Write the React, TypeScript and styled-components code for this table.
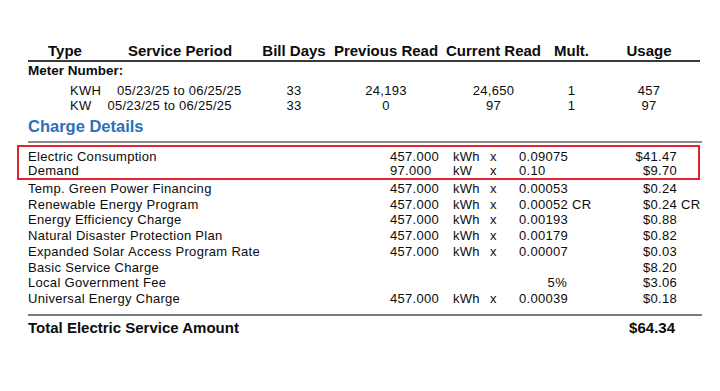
import styled, { createGlobalStyle } from "styled-components"

type Charge = {
  label: string
  qty?: string
  unit?: string
  rate?: string
  rateRight?: boolean
  amount: string
  suffix?: string
}

const highlighted: Charge[] = [
  { label: "Electric Consumption", qty: "457.000", unit: "kWh", rate: "0.09075", amount: "$41.47" },
  { label: "Demand", qty: "97.000", unit: "kW", rate: "0.10", amount: "$9.70" },
]

const charges: Charge[] = [
  { label: "Temp. Green Power Financing", qty: "457.000", unit: "kWh", rate: "0.00053", amount: "$0.24" },
  { label: "Renewable Energy Program", qty: "457.000", unit: "kWh", rate: "0.00052 CR", amount: "$0.24", suffix: "CR" },
  { label: "Energy Efficiency Charge", qty: "457.000", unit: "kWh", rate: "0.00193", amount: "$0.88" },
  { label: "Natural Disaster Protection Plan", qty: "457.000", unit: "kWh", rate: "0.00179", amount: "$0.82" },
  { label: "Expanded Solar Access Program Rate", qty: "457.000", unit: "kWh", rate: "0.00007", amount: "$0.03" },
  { label: "Basic Service Charge", amount: "$8.20" },
  { label: "Local Government Fee", rate: "5%", rateRight: true, amount: "$3.06" },
  { label: "Universal Energy Charge", qty: "457.000", unit: "kWh", rate: "0.00039", amount: "$0.18" },
]

const meters = [
  { type: "KWH", period: "05/23/25 to 06/25/25", days: "33", prev: "24,193", curr: "24,650", mult: "1", usage: "457" },
  { type: "KW", period: "05/23/25 to 06/25/25", days: "33", prev: "0", curr: "97", mult: "1", usage: "97" },
]

function ChargeLine({ c }: { c: Charge }) {
  return (
    <ChargeRow>
      <span>{c.label}</span>
      <span>{c.qty}</span>
      <span>{c.unit}</span>
      <span>{c.qty ? "x" : ""}</span>
      <Rate $right={c.rateRight}>{c.rate}</Rate>
      <Amount>{c.amount}</Amount>
      <Suffix>{c.suffix}</Suffix>
    </ChargeRow>
  )
}

export default function App() {
  return (
    <>
      <GlobalStyle />
      <Page>
        <HeaderRow>
          <span>Type</span>
          <span>Service Period</span>
          <span>Bill Days</span>
          <span>Previous Read</span>
          <span>Current Read</span>
          <span>Mult.</span>
          <span>Usage</span>
        </HeaderRow>
        <MeterLabel>Meter Number:</MeterLabel>
        <MeterBlock>
          {meters.map((m) => (
            <MeterRow key={m.type}>
              <Period>
                <MeterType>{m.type}</MeterType>
                {m.period}
              </Period>
              <span>{m.days}</span>
              <span>{m.prev}</span>
              <span>{m.curr}</span>
              <span>{m.mult}</span>
              <span>{m.usage}</span>
            </MeterRow>
          ))}
        </MeterBlock>
        <SectionTitle>Charge Details</SectionTitle>
        <Charges>
          <Highlight>
            {highlighted.map((c) => (
              <ChargeLine key={c.label} c={c} />
            ))}
          </Highlight>
          <ChargeList>
            {charges.map((c) => (
              <ChargeLine key={c.label} c={c} />
            ))}
          </ChargeList>
        </Charges>
        <TotalRow>
          <span>Total Electric Service Amount</span>
          <Amount>$64.34</Amount>
        </TotalRow>
      </Page>
    </>
  )
}

const GlobalStyle = createGlobalStyle`
  body {
    margin: 0;
    background: #ffffff;
    color: #0c0c0c;
    font-family: "Liberation Sans", Arial, sans-serif;
  }
`
const Page = styled.div`
  width: 674px;
  padding: 42px 0 0 28px;
`
const columns = "74px 156px 72px 112px 103px 53px 102px"

const HeaderRow = styled.div`
  display: grid;
  grid-template-columns: ${columns};
  width: 672px;
  font-size: 15px;
  font-weight: bold;
  line-height: 18px;
  text-align: center;
  white-space: nowrap;
  border-bottom: 2px solid #3a3a3a;
`
const MeterLabel = styled.div`
  margin-top: 1px;
  font-size: 13.5px;
  font-weight: bold;
  line-height: 16px;
`
const MeterBlock = styled.div`
  margin-top: 4px;
`
const MeterRow = styled.div`
  display: grid;
  grid-template-columns: ${columns};
  width: 672px;
  font-size: 13px;
  letter-spacing: 0.25px;
  line-height: 15px;
  text-align: center;
  white-space: nowrap;
`
const Period = styled.span`
  grid-column: span 2;
  padding-left: 42px;
  text-align: left;
`
const MeterType = styled.span`
  margin-right: 16px;
`
const SectionTitle = styled.div`
  margin: 3px 0 5px;
  color: #2b70b8;
  font-size: 16.5px;
  font-weight: bold;
  line-height: 20px;
`
const Charges = styled.div`
  border-top: 2px solid #8c8c8c;
  padding-top: 2px;
`
const Highlight = styled.div`
  margin: 0 2px 0 -11px;
  padding: 3px 0 0 9px;
  border: 2px solid #e0232f;
`
const ChargeList = styled.div`
  margin-top: 1px;
  & > div {
    line-height: 15.7px;
  }
`
const ChargeRow = styled.div`
  display: grid;
  grid-template-columns: 362px 63px 37px 29px 48px 110px 25px;
  font-size: 13px;
  letter-spacing: 0.3px;
  line-height: 14px;
  white-space: nowrap;
`
const Rate = styled.span<{ $right?: boolean }>`
  text-align: ${(p) => (p.$right ? "right" : "left")};
`
const Amount = styled.span`
  text-align: right;
`
const Suffix = styled.span`
  padding-left: 4px;
`
const TotalRow = styled.div`
  display: grid;
  grid-template-columns: 537px 110px;
  margin-top: 7px;
  padding-top: 3px;
  border-top: 2px solid #7a7a7a;
  font-size: 15px;
  font-weight: bold;
  line-height: 18px;
  white-space: nowrap;
`
